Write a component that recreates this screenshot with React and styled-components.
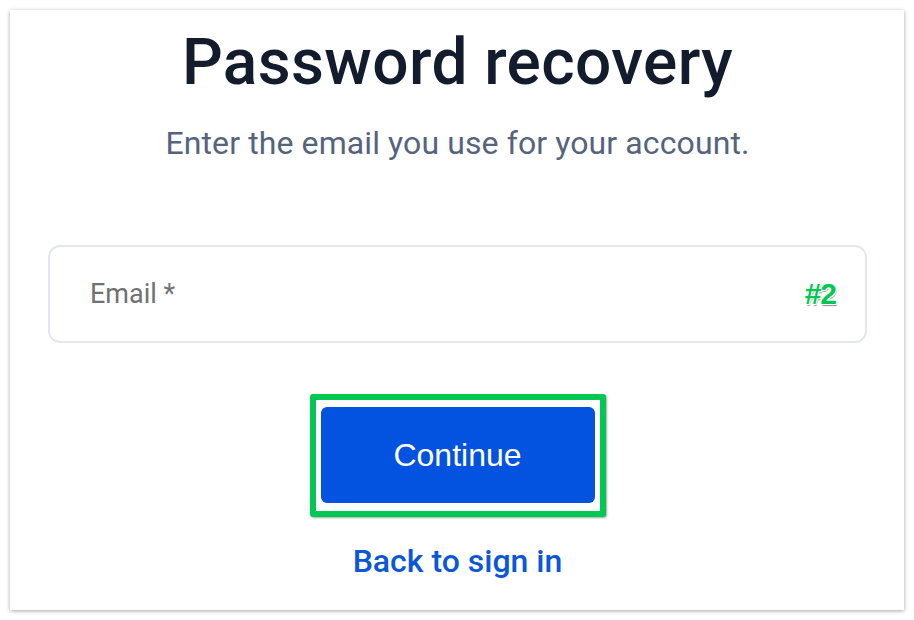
import React from 'react';
import styled, { createGlobalStyle } from 'styled-components';

const GlobalStyle = createGlobalStyle`
  html, body {
    margin: 0;
    padding: 0;
    background: #ffffff;
  }
  body {
    font-family: Roboto, "Open Sans", sans-serif;
  }
`;

function App() {
  return (
    <>
      <GlobalStyle />
      <Page>
        <Card>
          <Title>Password recovery</Title>
          <Subtitle>Enter the email you use for your account.</Subtitle>
          <Field>
            <Input placeholder="Email *" />
            <Badge>#2</Badge>
          </Field>
          <Highlight>
            <Button>Continue</Button>
          </Highlight>
          <BackLink href="#">Back to sign in</BackLink>
        </Card>
      </Page>
    </>
  );
}

const Page = styled.div`
    width: 914px;
    height: 620px;
    padding: 10px;
    box-sizing: border-box;
    overflow: hidden;
`

const Card = styled.div`
    height: 600px;
    background: #ffffff;
    box-shadow: 0 1px 4px rgba(0,0,0,0.35);
    display: flex;
    flex-direction: column;
    align-items: center;
    padding: 0 37px 0 38px;
    box-sizing: border-box;
`

const Title = styled.h1`
    margin: 15px 0 0;
    font-size: 64px;
    line-height: 76px;
    font-weight: 500;
    color: #121c2d;
    letter-spacing: 0.4px;
`

const Subtitle = styled.p`
    margin: 22px 0 0;
    font-size: 32px;
    line-height: 40px;
    font-weight: 400;
    color: #56637d;
    letter-spacing: 0.1px;
`

const Field = styled.div`
    position: relative;
    width: 100%;
    margin-top: 82px;
`

const Input = styled.input`
    display: block;
    width: 100%;
    height: 98px;
    box-sizing: border-box;
    border: 2px solid #e3e7ec;
    border-radius: 12px;
    padding: 0 40px;
    font-family: Roboto, "Open Sans", sans-serif;
    font-size: 27px;
    color: #222;
    outline: none;
    &::placeholder {
        color: #717171;
    }
`

const Badge = styled.span`
    position: absolute;
    right: 31px;
    top: 50%;
    transform: translateY(-50%);
    font-family: "Liberation Sans", Arial, sans-serif;
    font-weight: 700;
    font-size: 30px;
    letter-spacing: -1px;
    color: #00c853;
    text-shadow: -1px -1px 0 #fff, 1px -1px 0 #fff, -1px 1px 0 #fff, 1px 1px 0 #fff, 1px 2px 1px rgba(0,0,0,0.45);
`

const Highlight = styled.div`
    margin-top: 51px;
    border: 6px solid #00c853;
    border-radius: 3px;
    padding: 7px 5px 8px;
    background: #fff;
    box-shadow: 1px 1px 2px rgba(0,0,0,0.35);
`

const Button = styled.button`
    display: block;
    width: 274px;
    height: 96px;
    border: none;
    border-radius: 6px;
    background: #0353e0;
    color: #ffffff;
    font-family: "Liberation Sans", Arial, sans-serif;
    font-size: 32px;
    cursor: pointer;
`

const BackLink = styled.a`
    margin-top: 24px;
    font-size: 32px;
    line-height: 40px;
    font-weight: 500;
    color: #0a58d8;
    text-decoration: none;
`

export default App;
